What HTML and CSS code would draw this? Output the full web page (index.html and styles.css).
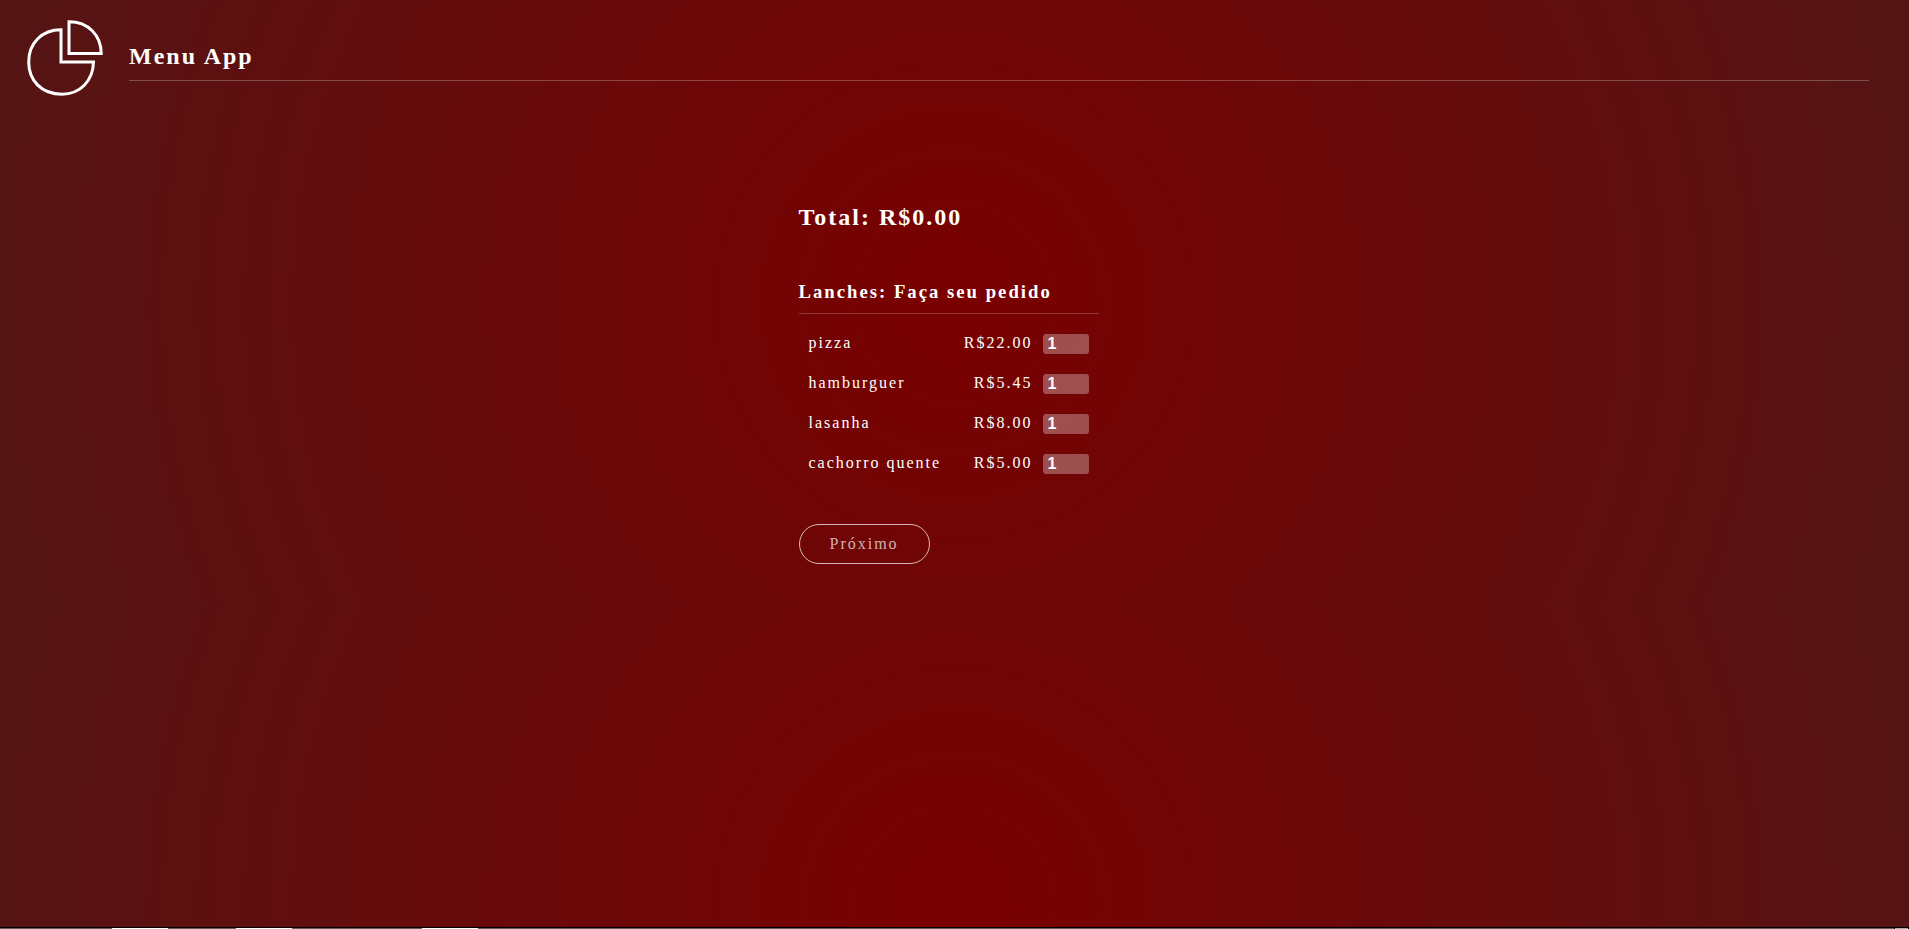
FILE: index.html
```html
<!DOCTYPE html>
<html lang="pt-BR">
<head>
<meta charset="utf-8">
<title>Menu App</title>
<link rel="stylesheet" href="styles.css">
</head>
<body>
<header class="header">
  <svg class="logo" viewBox="0 0 78 78" aria-hidden="true">
    <path d="M35 10.800V43H67.500C67 62 54 75.200 36 75.200C15 75.200 2.700 61 2.700 43C2.700 24 16 10.800 35 10.800Z"/>
    <path d="M43 2.800V34.500H75.200C75.200 16 62 2.800 43 2.800Z"/>
  </svg>
  <h1 class="brand">Menu App</h1>
</header>
<main class="order">
  <h2 class="total">Total: R$0.00</h2>
  <h3 class="section-title">Lanches: Faça seu pedido</h3>
  <ul class="items">
    <li class="item"><label class="name" for="pizza">pizza</label><span>R$22.00</span><input class="qty" id="pizza" type="number" value="1"></li>
    <li class="item"><label class="name" for="hamburguer">hamburguer</label><span>R$5.45</span><input class="qty" id="hamburguer" type="number" value="1"></li>
    <li class="item"><label class="name" for="lasanha">lasanha</label><span>R$8.00</span><input class="qty" id="lasanha" type="number" value="1"></li>
    <li class="item"><label class="name" for="cachorro">cachorro quente</label><span>R$5.00</span><input class="qty" id="cachorro" type="number" value="1"></li>
  </ul>
  <button class="next" type="button">Próximo</button>
</main>
<footer class="taskbar"><i class="tab tab-first"></i><i class="tab tab-second"></i><i class="tab tab-third"></i><i class="tab corner"></i></footer>
</body>
</html>
```
FILE: styles.css
```css
* {
  box-sizing: border-box;
}

body {
  display: flex;
  flex-direction: column;
  min-height: 100vh;
  margin: 0;
  color: #fff;
  font-family: "Liberation Serif", "Times New Roman", serif;
  font-size: 16px;
  letter-spacing: 2px;
  background: radial-gradient(circle, #7a0000, #541515) 0 0 / 100% 604px;
}

h1, h2, h3, ul {
  margin: 0;
  padding: 0;
}

.header {
  display: flex;
  align-items: flex-start;
  gap: 25px;
  padding: 19px 40px 0 26px;
}

.logo {
  width: 78px;
  height: 78px;
  fill: none;
  stroke: #fff;
  stroke-width: 3;
}

.brand {
  flex: 1;
  padding: 24px 0 11px;
  border-bottom: 1px solid rgba(255, 255, 255, 0.25);
  font-size: 24px;
  line-height: 26px;
}

.order {
  flex: 1;
  width: 300px;
  margin: 106px 0 0 calc(50% - 156px);
}

.total {
  font-size: 24px;
  line-height: 28px;
}

.section-title {
  margin-top: 50px;
  padding-bottom: 10px;
  border-bottom: 1px solid rgba(255, 255, 255, 0.2);
  line-height: 22px;
}

.items {
  padding-top: 10px;
  list-style: none;
}

.item {
  display: flex;
  align-items: center;
  height: 40px;
  padding: 0 10px;
  line-height: 18px;
}

.item label,
.item span {
  padding-bottom: 2px;
}

.name {
  flex: 1;
}

.qty {
  width: 46px;
  height: 20px;
  margin-left: 10px;
  padding: 0 5px;
  border: 0;
  border-radius: 3px;
  color: #fff;
  background: rgba(255, 255, 255, 0.3);
  font: bold 16px "Liberation Sans", Arial, sans-serif;
}

.next {
  height: 40px;
  margin-top: 40px;
  padding: 0 30px;
  border: 1px solid rgba(255, 255, 255, 0.7);
  border-radius: 20px;
  color: rgba(255, 255, 255, 0.7);
  background: transparent;
  font: inherit;
  letter-spacing: 2px;
}

.taskbar {
  display: flex;
  height: 2px;
  border-top: 1px solid #000;
  background: #6b5a5c;
}

.tab {
  width: 56px;
  background: #fff;
}

.tab-first {
  margin-left: 112px;
}

.tab-second {
  margin-left: 68px;
}

.tab-third {
  margin-left: 130px;
}

.corner {
  width: 15px;
  margin-left: auto;
  border: solid #000;
  border-width: 0 1px;
  background: #b0a8aa;
}
```
